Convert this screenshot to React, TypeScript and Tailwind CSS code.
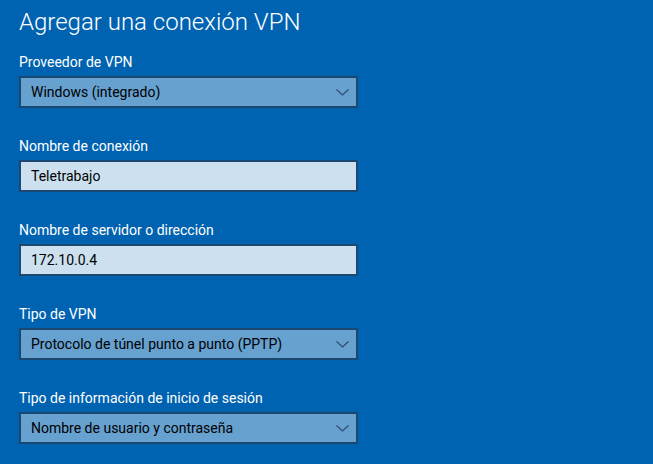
const fieldFont = { fontFamily: 'Roboto, "Noto Sans", sans-serif' };

function Chevron() {
  return (
    <svg width="13" height="7" viewBox="0 0 13 7" className="shrink-0">
      <polyline points="0.5,0.5 6.5,6 12.5,0.5" fill="none" stroke="#2d4a67" strokeWidth="1.1" />
    </svg>
  );
}

interface FieldProps {
  label: string;
  value: string;
  select?: boolean;
}

function Field({ label, value, select }: FieldProps) {
  return (
    <div className="flex flex-col mb-[28px]">
      <div className="text-[14px] leading-[20px] text-white">{label}</div>
      <div
        className={`mt-[4px] w-[339px] h-[32px] border-2 border-[#1a4871] flex items-center pl-[10px] pr-[7px] ${
          select ? 'bg-[#66a1d0]' : 'bg-[#cce0ef]'
        }`}
      >
        <span className="flex-1 text-[14px] leading-[28px] text-black">{value}</span>
        {select && <Chevron />}
      </div>
    </div>
  );
}

export default function App() {
  return (
    <div className="w-[653px] h-[464px] bg-[#0063b1] overflow-hidden pl-[19px] pt-[6px]" style={fieldFont}>
      <h1 className="text-[24px] leading-[32px] font-light text-white mb-[14px]">Agregar una conexión VPN</h1>
      <Field label="Proveedor de VPN" value="Windows (integrado)" select />
      <Field label="Nombre de conexión" value="Teletrabajo" />
      <Field label="Nombre de servidor o dirección" value="172.10.0.4" />
      <Field label="Tipo de VPN" value="Protocolo de túnel punto a punto (PPTP)" select />
      <Field label="Tipo de información de inicio de sesión" value="Nombre de usuario y contraseña" select />
    </div>
  );
}
